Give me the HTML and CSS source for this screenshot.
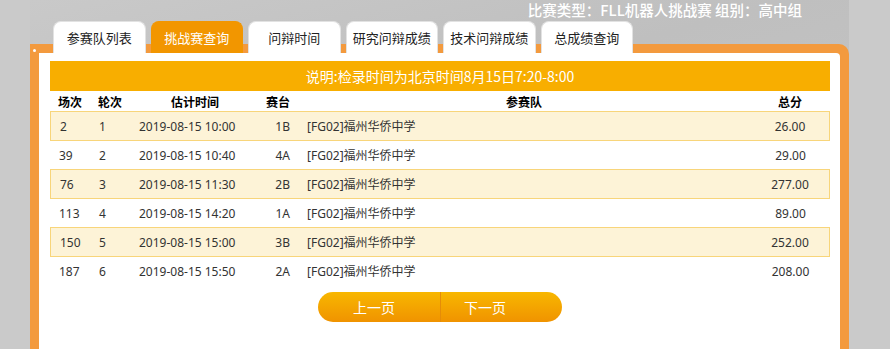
FILE: index.html
```html
<!DOCTYPE html>
<html lang="zh-CN">
<head>
    <meta charset="UTF-8">
    <title>挑战赛查询</title>
    <link rel="stylesheet" href="styles.css">
</head>
<body>
    <div class="wrap">
        <div class="info">比赛类型：FLL机器人挑战赛 组别：高中组</div>

        <ul class="tabs">
            <li>参赛队列表</li>
            <li class="active">挑战赛查询</li>
            <li>问辩时间</li>
            <li>研究问辩成绩</li>
            <li>技术问辩成绩</li>
            <li>总成绩查询</li>
        </ul>

        <div class="frame">
            <div class="panel">
                <div class="notice">说明:检录时间为北京时间8月15日7:20-8:00</div>

                <table class="list">
                    <colgroup>
                        <col class="c-match">
                        <col class="c-round">
                        <col class="c-time">
                        <col class="c-table">
                        <col class="c-team">
                        <col class="c-score">
                    </colgroup>
                    <thead>
                        <tr>
                            <th>场次</th>
                            <th>轮次</th>
                            <th class="center">估计时间</th>
                            <th class="right">赛台</th>
                            <th class="center">参赛队</th>
                            <th class="center">总分</th>
                        </tr>
                    </thead>
                    <tbody>
                        <tr class="odd">
                            <td>2</td><td>1</td><td>2019-08-15 10:00</td><td class="right">1B</td><td>[FG02]福州华侨中学</td><td class="center">26.00</td>
                        </tr>
                        <tr>
                            <td>39</td><td>2</td><td>2019-08-15 10:40</td><td class="right">4A</td><td>[FG02]福州华侨中学</td><td class="center">29.00</td>
                        </tr>
                        <tr class="odd">
                            <td>76</td><td>3</td><td>2019-08-15 11:30</td><td class="right">2B</td><td>[FG02]福州华侨中学</td><td class="center">277.00</td>
                        </tr>
                        <tr>
                            <td>113</td><td>4</td><td>2019-08-15 14:20</td><td class="right">1A</td><td>[FG02]福州华侨中学</td><td class="center">89.00</td>
                        </tr>
                        <tr class="odd">
                            <td>150</td><td>5</td><td>2019-08-15 15:00</td><td class="right">3B</td><td>[FG02]福州华侨中学</td><td class="center">252.00</td>
                        </tr>
                        <tr>
                            <td>187</td><td>6</td><td>2019-08-15 15:50</td><td class="right">2A</td><td>[FG02]福州华侨中学</td><td class="center">208.00</td>
                        </tr>
                    </tbody>
                </table>

                <div class="pager">
                    <a class="prev">上一页</a>
                    <a class="next">下一页</a>
                </div>
            </div>
        </div>
    </div>
</body>
</html>
```

FILE: styles.css
```css
html, body {
    margin: 0;
    padding: 0;
}

body {
    background-color: #cacaca;
    font-family: "Noto Sans", "Noto Sans CJK SC", sans-serif;
    font-size: 12px;
    color: #333;
    height: 349px;
    overflow: hidden;
}

.wrap {
    margin-left: 30px;
    width: 819px;
    background: linear-gradient(165deg, #c9c9c9 0%, #bfbfbf 35%, #c3c3c3 60%, #bcbcbc 100%);
}

.info {
    height: 21px;
    line-height: 20px;
    padding-right: 47px;
    text-align: right;
    color: #fff;
    font-size: 14.5px;
    font-weight: 500;
    font-family: "Noto Sans CJK SC", sans-serif;
}

/* tabs */
.tabs {
    list-style: none;
    margin: 0;
    padding: 0 0 0 23px;
    display: flex;
    gap: 5px;
    height: 32px;
    position: relative;
    z-index: 1;
}

.tabs li {
    width: 92.5px;
    box-sizing: border-box;
    height: 32px;
    line-height: 31px;
    text-align: center;
    font-size: 13px;
    font-family: "Noto Sans CJK SC", sans-serif;
    background-color: #fff;
    color: #222;
    border: 1px solid #e2e2e2;
    border-bottom: none;
    border-radius: 8px 8px 0 0;
}

.tabs li.active {
    background-color: #f29600;
    border-color: #f29600;
    color: #fff;
}

/* orange frame */
.frame {
    margin-top: -9px;
    background-color: #f39a3e;
    border-radius: 0 10px 0 0;
    padding: 9px 9px 0 9px;
    position: relative;
}

.frame::before {
    content: "";
    position: absolute;
    left: 3px;
    top: 5px;
    width: 3px;
    height: 3px;
    border-radius: 50%;
    background-color: #fff;
}

.panel {
    background-color: #fff;
    border-radius: 0 4px 0 0;
    padding: 8px 10px 0 11px;
    height: 300px;
}

.notice {
    height: 30px;
    line-height: 30px;
    background-color: #f8ae00;
    color: #fff;
    text-align: center;
    font-size: 14px;
    font-family: "Noto Sans CJK SC", sans-serif;
}

/* table */
.list {
    width: 780px;
    table-layout: fixed;
    border-collapse: separate;
    border-spacing: 0;
}

.c-match { width: 40px; }
.c-round { width: 40px; }
.c-time { width: 130px; }
.c-table { width: 38px; }
.c-team { width: 452px; }
.c-score { width: 80px; }

.list th {
    height: 20px;
    padding: 0 8px 0 8px;
    font-weight: bold;
    color: #000;
    text-align: left;
    white-space: nowrap;
    font-family: "Noto Sans CJK SC", sans-serif;
}

.list th.right {
    padding-left: 0;
}

.list td {
    height: 28px;
    padding: 0 8px 0 9px;
    white-space: nowrap;
}

.list .center { text-align: center; }
.list .right { text-align: right; }

.list tr.odd td {
    background-color: #fdf3d7;
    border-top: 1px solid #f8d57a;
    border-bottom: 1px solid #f8d57a;
}

.list tr.odd td:first-child { border-left: 1px solid #f8d57a; }
.list tr.odd td:last-child { border-right: 1px solid #f8d57a; }

/* pager */
.pager {
    display: flex;
    justify-content: center;
    margin-top: 7px;
}

.pager a {
    display: block;
    box-sizing: border-box;
    height: 30px;
    line-height: 30px;
    color: #fff;
    font-size: 14px;
    font-family: "Noto Sans CJK SC", sans-serif;
    background: linear-gradient(#f8b700, #f09300);
    cursor: pointer;
}

.pager .prev {
    width: 123px;
    padding-left: 35px;
    border-radius: 15px 0 0 15px;
    border-right: 1px solid #e58c08;
}

.pager .next {
    width: 121px;
    padding-left: 23px;
    border-radius: 0 15px 15px 0;
}
```
